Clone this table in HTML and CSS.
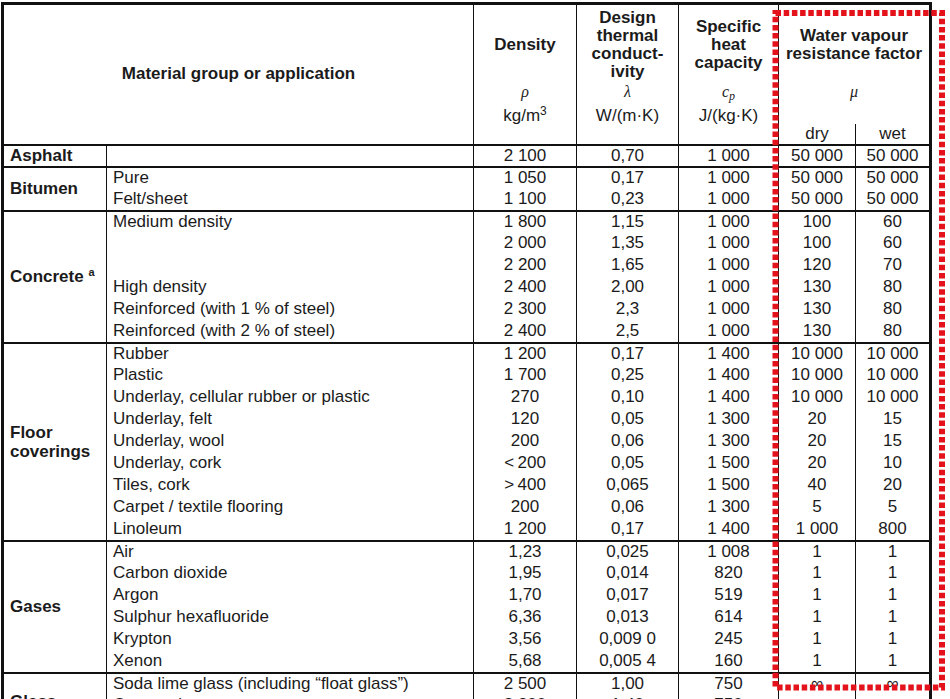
FILE: index.html
```html
<!DOCTYPE html>
<html>
<head>
  <title>Thermal properties of building materials</title>
  <link rel="stylesheet" href="styles.css">
</head>
<body>
  <div class="sheet">
    <table class="props">
      <colgroup>
        <col class="c-group">
        <col class="c-app">
        <col class="c-dens">
        <col class="c-cond">
        <col class="c-heat">
        <col class="c-dry">
        <col class="c-wet">
      </colgroup>
      <thead>
        <tr class="head-main">
          <th colspan="2" rowspan="2" class="h-material">Material group or application</th>
          <th rowspan="2">
            <div class="h-stack">
              <div class="h-title">Density</div>
              <div class="h-sym">&rho;</div>
              <div class="h-unit">kg/m<sup>3</sup></div>
            </div>
          </th>
          <th rowspan="2">
            <div class="h-stack">
              <div class="h-title">Design<br>thermal<br>conduct-<br>ivity</div>
              <div class="h-sym">&lambda;</div>
              <div class="h-unit">W/(m&middot;K)</div>
            </div>
          </th>
          <th rowspan="2">
            <div class="h-stack">
              <div class="h-title">Specific<br>heat<br>capacity</div>
              <div class="h-sym">c<sub>p</sub></div>
              <div class="h-unit">J/(kg&middot;K)</div>
            </div>
          </th>
          <th colspan="2" class="h-mu">
            <div class="h-stack">
              <div class="h-title">Water vapour<br>resistance factor</div>
              <div class="h-sym">&mu;</div>
            </div>
          </th>
        </tr>
        <tr class="head-sub">
          <th class="h-dry">dry</th>
          <th class="h-wet">wet</th>
        </tr>
      </thead>

      <tbody class="grp">
        <tr class="only">
          <th class="g">Asphalt</th>
          <td class="app"></td><td>2&nbsp;100</td><td>0,70</td><td>1&nbsp;000</td><td>50&nbsp;000</td><td>50&nbsp;000</td>
        </tr>
      </tbody>

      <tbody class="grp">
        <tr>
          <th class="g" rowspan="2">Bitumen</th>
          <td class="app">Pure</td><td>1&nbsp;050</td><td>0,17</td><td>1&nbsp;000</td><td>50&nbsp;000</td><td>50&nbsp;000</td>
        </tr>
        <tr>
          <td class="app">Felt/sheet</td><td>1&nbsp;100</td><td>0,23</td><td>1&nbsp;000</td><td>50&nbsp;000</td><td>50&nbsp;000</td>
        </tr>
      </tbody>

      <tbody class="grp">
        <tr>
          <th class="g" rowspan="6">Concrete <sup>a</sup></th>
          <td class="app">Medium density</td><td>1&nbsp;800</td><td>1,15</td><td>1&nbsp;000</td><td>100</td><td>60</td>
        </tr>
        <tr><td class="app"></td><td>2&nbsp;000</td><td>1,35</td><td>1&nbsp;000</td><td>100</td><td>60</td></tr>
        <tr><td class="app"></td><td>2&nbsp;200</td><td>1,65</td><td>1&nbsp;000</td><td>120</td><td>70</td></tr>
        <tr><td class="app">High density</td><td>2&nbsp;400</td><td>2,00</td><td>1&nbsp;000</td><td>130</td><td>80</td></tr>
        <tr><td class="app">Reinforced (with 1 % of steel)</td><td>2&nbsp;300</td><td>2,3</td><td>1&nbsp;000</td><td>130</td><td>80</td></tr>
        <tr><td class="app">Reinforced (with 2 % of steel)</td><td>2&nbsp;400</td><td>2,5</td><td>1&nbsp;000</td><td>130</td><td>80</td></tr>
      </tbody>

      <tbody class="grp">
        <tr>
          <th class="g" rowspan="9">Floor<br>coverings</th>
          <td class="app">Rubber</td><td>1&nbsp;200</td><td>0,17</td><td>1&nbsp;400</td><td>10&nbsp;000</td><td>10&nbsp;000</td>
        </tr>
        <tr><td class="app">Plastic</td><td>1&nbsp;700</td><td>0,25</td><td>1&nbsp;400</td><td>10&nbsp;000</td><td>10&nbsp;000</td></tr>
        <tr><td class="app">Underlay, cellular rubber or plastic</td><td>270</td><td>0,10</td><td>1&nbsp;400</td><td>10&nbsp;000</td><td>10&nbsp;000</td></tr>
        <tr><td class="app">Underlay, felt</td><td>120</td><td>0,05</td><td>1&nbsp;300</td><td>20</td><td>15</td></tr>
        <tr><td class="app">Underlay, wool</td><td>200</td><td>0,06</td><td>1&nbsp;300</td><td>20</td><td>15</td></tr>
        <tr><td class="app">Underlay, cork</td><td>&lt;&thinsp;200</td><td>0,05</td><td>1&nbsp;500</td><td>20</td><td>10</td></tr>
        <tr><td class="app">Tiles, cork</td><td>&gt;&thinsp;400</td><td>0,065</td><td>1&nbsp;500</td><td>40</td><td>20</td></tr>
        <tr><td class="app">Carpet / textile flooring</td><td>200</td><td>0,06</td><td>1&nbsp;300</td><td>5</td><td>5</td></tr>
        <tr><td class="app">Linoleum</td><td>1&nbsp;200</td><td>0,17</td><td>1&nbsp;400</td><td>1&nbsp;000</td><td>800</td></tr>
      </tbody>

      <tbody class="grp">
        <tr>
          <th class="g" rowspan="6">Gases</th>
          <td class="app">Air</td><td>1,23</td><td>0,025</td><td>1&nbsp;008</td><td>1</td><td>1</td>
        </tr>
        <tr><td class="app">Carbon dioxide</td><td>1,95</td><td>0,014</td><td>820</td><td>1</td><td>1</td></tr>
        <tr><td class="app">Argon</td><td>1,70</td><td>0,017</td><td>519</td><td>1</td><td>1</td></tr>
        <tr><td class="app">Sulphur hexafluoride</td><td>6,36</td><td>0,013</td><td>614</td><td>1</td><td>1</td></tr>
        <tr><td class="app">Krypton</td><td>3,56</td><td>0,009&nbsp;0</td><td>245</td><td>1</td><td>1</td></tr>
        <tr><td class="app">Xenon</td><td>5,68</td><td>0,005&nbsp;4</td><td>160</td><td>1</td><td>1</td></tr>
      </tbody>

      <tbody class="grp">
        <tr>
          <th class="g g-glass" rowspan="3">Glass</th>
          <td class="app">Soda lime glass (including &ldquo;float glass&rdquo;)</td><td>2&nbsp;500</td><td>1,00</td><td>750</td><td>&infin;</td><td>&infin;</td>
        </tr>
        <tr><td class="app">Quartz glass</td><td>2&nbsp;200</td><td>1,40</td><td>750</td><td>&infin;</td><td>&infin;</td></tr>
        <tr><td class="app">Glass mosaic</td><td>2&nbsp;000</td><td>1,20</td><td>750</td><td>&infin;</td><td>&infin;</td></tr>
      </tbody>
    </table>

    <!-- highlight drawn over the vapour columns -->
    <svg class="mark" width="950" height="699" viewBox="0 0 950 699">
      <rect x="775.5" y="13" width="166.5" height="674.5" fill="none" stroke="#e3121b" stroke-width="6" stroke-dasharray="5.5 2.7"/>
    </svg>
  </div>
</body>
</html>
```

FILE: styles.css
```css
:root {
  --ink: #1b1b1b;
  --rule: #111111;
  --mark: #e3121b;
}

html, body {
  margin: 0;
  background: #ffffff;
  overflow: hidden;
}

body {
  font-family: "Liberation Sans", Arial, sans-serif;
  color: var(--ink);
}

.sheet {
  position: relative;
  width: 950px;
  height: 699px;
  overflow: hidden;
}

.props {
  border-collapse: collapse;
  table-layout: fixed;
  width: 928px;
  margin: 2px 0 0 1px;
  border: 3px solid var(--rule);
  font-size: 17px;
}

.c-group { width: 104px; }
.c-app { width: 367px; }
.c-dens { width: 103px; }
.c-cond { width: 102px; }
.c-heat { width: 100px; }
.c-dry { width: 77px; }
.c-wet { width: 75px; }

.props th,
.props td {
  padding: 0;
  border-left: 1px solid var(--rule);
  border-right: 1px solid var(--rule);
}

/* header */
.props thead {
  border-bottom: 2px solid var(--rule);
}

.head-main {
  height: 120px;
}

.head-main th {
  vertical-align: top;
  text-align: center;
  font-weight: bold;
  line-height: 18px;
}

.head-main th.h-material {
  vertical-align: middle;
  font-size: 17px;
}

.h-stack {
  display: flex;
  flex-direction: column;
  align-items: center;
}

.h-title {
  height: 80px;
  display: flex;
  flex-direction: column;
  justify-content: center;
}

.h-sym {
  height: 14px;
  line-height: 14px;
  font-family: "Liberation Serif", "Times New Roman", serif;
  font-style: italic;
  font-weight: normal;
  font-size: 16px;
  color: #222;
}

.h-sym sub {
  font-size: 12px;
  vertical-align: -3px;
}

.h-unit {
  margin-top: 6px;
  line-height: 22px;
  font-weight: normal;
}

.h-unit sup {
  font-size: 12px;
  vertical-align: 6px;
  line-height: 0;
}

.head-sub {
  height: 20px;
}

.head-sub th {
  font-weight: normal;
  line-height: 20px;
  vertical-align: bottom;
  text-align: center;
}

.h-dry {
  border-right: 1px solid var(--rule);
}

/* body */
tbody.grp {
  border-top: 2px solid var(--rule);
}

.props td {
  height: 22px;
  line-height: 22px;
  text-align: center;
  white-space: nowrap;
}

.props td.app {
  text-align: left;
  padding-left: 6px;
}

tbody.grp tr:first-child td {
  height: 20px;
  line-height: 20px;
}

tbody.grp tr.only td {
  height: 20px;
  line-height: 20px;
}

.props th.g {
  text-align: left;
  vertical-align: middle;
  padding-left: 6px;
  font-weight: bold;
  line-height: 19px;
}

.props th.g-glass {
  padding-bottom: 8px;
}

.g sup {
  font-size: 11px;
  vertical-align: 6px;
  line-height: 0;
}

.mark {
  position: absolute;
  left: 0;
  top: 0;
  pointer-events: none;
}
```
